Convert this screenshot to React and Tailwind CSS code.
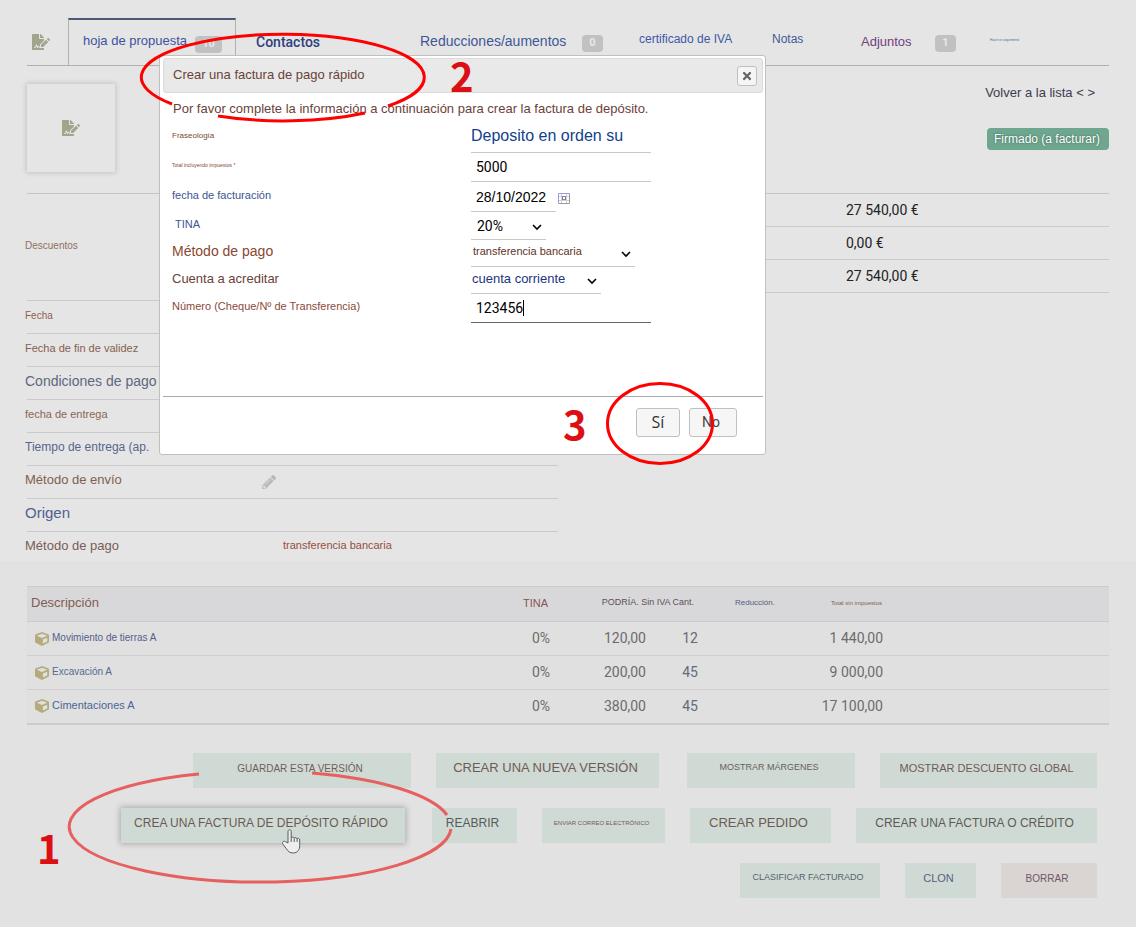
import { FaCube, FaFileSignature, FaPencilAlt, FaTimes } from "react-icons/fa";

const detailRows = [
  { label: "Descuentos", text: "text-[10px] text-[#8f6f63]", height: "h-[107px]" },
  { label: "Fecha", text: "text-[10px] text-[#8f5f50]", height: "h-[33px]" },
  { label: "Fecha de fin de validez", text: "text-[11px] text-[#85604f]", height: "h-[33px]" },
  { label: "Condiciones de pago", text: "text-[14px] text-[#5f6780]", height: "h-[33px]" },
  { label: "fecha de entrega", text: "text-[11px] text-[#8a6557]", height: "h-[33px]" },
  { label: "Tiempo de entrega (ap.", text: "text-[12px] text-[#566690]", height: "h-[33px]" },
  {
    label: "Método de envío",
    text: "text-[13px] text-[#80604f]",
    height: "h-[33px]",
    value: <FaPencilAlt className="size-3.5 text-[#b9b9b9]" />,
  },
  { label: "Origen", text: "text-[15px] text-[#50608f]", height: "h-[33px]" },
];

const totals = ["27 540,00 €", "0,00 €", "27 540,00 €"];

const lines = [
  { name: "Movimiento de tierras A", text: "text-[10px] text-[#56608a]", price: "120,00", qty: "12", total: "1 440,00" },
  { name: "Excavación A", text: "text-[10px] text-[#566a90]", price: "200,00", qty: "45", total: "9 000,00" },
  { name: "Cimentaciones A", text: "text-[11px] text-[#4a6596]", price: "380,00", qty: "45", total: "17 100,00" },
];

const actions = [
  { label: "GUARDAR ESTA VERSIÓN", style: "w-[218px] text-[10px] text-[#6e5f5a]" },
  { label: "CREAR UNA NUEVA VERSIÓN", style: "w-[223px] mr-[3px] text-[13px] text-[#6e5a56]" },
  { label: "MOSTRAR MÁRGENES", style: "w-[168px] text-[9px] text-[#66605c]" },
  { label: "MOSTRAR DESCUENTO GLOBAL", style: "w-[217px] text-[11px] text-[#6e5c56]" },
  {
    label: "CREA UNA FACTURA DE DEPÓSITO RÁPIDO",
    style: "w-[284px] mr-0.5 text-[12px] text-[#6a5a56] shadow-[0_0_6px_1px_rgba(0,0,0,0.25)]",
  },
  { label: "REABRIR", style: "w-[85px] text-[12px] text-[#565c5c]" },
  { label: "ENVIAR CORREO ELECTRÓNICO", style: "w-[123px] text-[6px] text-[#6e5a56]" },
  { label: "CREAR PEDIDO", style: "w-[141px] text-[13px] text-[#6e5a56]" },
  { label: "CREAR UNA FACTURA O CRÉDITO", style: "w-[241px] text-[12px] text-[#5c5c56]" },
  { label: "CLASIFICAR FACTURADO", style: "w-[140px] text-[9px] text-[#565f70]" },
  { label: "CLON", style: "w-[71px] text-[11px] text-[#5a6080]" },
];

const Badge = ({ children, className }) => (
  <span
    className={`mt-1 flex h-[17px] items-center justify-center rounded bg-[#c1c1c1] font-[Roboto,sans-serif] text-[11px] font-bold text-[#e8e8e8] ${className}`}
  >
    {children}
  </span>
);

const Tabs = () => (
  <nav className="flex h-12 items-stretch border-b border-[#b0b0b0] whitespace-nowrap">
    <div className="flex w-[41px] items-center pl-[5px]">
      <FaFileSignature className="h-4 w-[18px] text-[#a0a68c]" />
    </div>
    <a
      href="#propuesta"
      className="flex w-[168px] items-center border-x border-t-2 border-x-[#b0b0b0] border-t-[#4b5878] pl-3.5 text-[13px] text-[#3d529f]"
    >
      <span className="pb-1">hoja de propuesta</span>
      <Badge className="ml-2 w-[27px]">10</Badge>
    </a>
    <a
      href="#contactos"
      className="flex w-[184px] items-center pt-0.5 pl-5 font-[Roboto,sans-serif] text-[14px] font-medium text-[#2f4080]"
    >
      Contactos
    </a>
    <a href="#reducciones" className="flex w-[219px] items-center text-[14px] text-[#3f5796]">
      <span className="w-[162px]">Reducciones/aumentos</span>
      <Badge className="w-[21px]">0</Badge>
    </a>
    <a href="#certificado" className="flex w-[133px] items-center pb-1.5 text-[12px] text-[#4058a8]">
      certificado de IVA
    </a>
    <a href="#notas" className="flex w-[89px] items-center pb-1.5 text-[12px] text-[#405a98]">
      Notas
    </a>
    <a href="#adjuntos" className="flex w-[129px] items-center text-[13px] text-[#703f80]">
      <span className="w-[74px]">Adjuntos</span>
      <Badge className="w-[21px]">1</Badge>
    </a>
    <a href="#seguimiento" className="flex items-center pb-0.5 text-[3px] text-[#4a6a9a]">
      Hacer un seguimiento
    </a>
  </nav>
);

const Banner = () => (
  <header className="flex h-[127px] items-start justify-between pt-[18px]">
    <div className="flex size-[88px] items-center justify-center shadow-[0_0_5px_1px_rgba(0,0,0,0.15)]">
      <FaFileSignature className="h-4 w-[18px] text-[#a0a68c]" />
    </div>
    <div className="flex flex-col items-end">
      <a href="#lista" className="mr-3.5 text-[13px] leading-[18px] text-[#3c3a50]">
        Volver a la lista &lt; &gt;
      </a>
      <span className="mt-[26px] flex h-[22px] w-[122px] items-center rounded bg-[#6ea68f] pl-[7px] text-[12px] whitespace-nowrap text-white [text-shadow:0_0_2px_#2f5f4c]">
        Firmado (a facturar)
      </span>
    </div>
  </header>
);

const Details = () => (
  <div className="grid grid-cols-2 gap-5">
    <dl className="border-t border-[#c4c4c4]">
      {detailRows.map((row) => (
        <div
          key={row.label}
          className={`flex items-center border-b border-[#cacaca] ${row.height}`}
        >
          <dt className={`-ml-0.5 w-[237px] pb-1 whitespace-nowrap ${row.text}`}>{row.label}</dt>
          <dd>{row.value}</dd>
        </div>
      ))}
      <div className="flex h-[29px] items-center">
        <dt className="-ml-0.5 w-[258px] pb-0.5 text-[13px] text-[#7c5c56]">Método de pago</dt>
        <dd className="pb-0.5 text-[11px] text-[#964f3f]">transferencia bancaria</dd>
      </div>
    </dl>
    <div className="border-t border-[#c4c4c4] font-[Roboto,sans-serif] text-[14px] text-[#222]">
      {totals.map((total, i) => (
        <div key={i} className="flex h-[33px] items-center border-b border-[#cacaca] pl-[268px]">
          {total}
        </div>
      ))}
    </div>
  </div>
);

const LinesTable = () => (
  <table className="w-full table-fixed border-collapse border-t border-b-2 border-[#cbcbcd]">
    <colgroup>
      <col />
      <col className="w-[50px]" />
      <col className="w-24" />
      <col className="w-[52px]" />
      <col className="w-[77px]" />
      <col className="w-[108px]" />
      <col className="w-[226px]" />
    </colgroup>
    <thead>
      <tr className="h-[35px] border-b border-[#cbcbcd] bg-[#d8d8da] text-right whitespace-nowrap [&>th]:p-0 [&>th]:pb-0.5 [&>th]:font-normal">
        <th className="text-left text-[13px] text-[#835c50]">
          <span className="pl-1">Descripción</span>
        </th>
        <th className="text-[11px] text-[#835650]">
          <span className="pr-0.5">TINA</span>
        </th>
        <th colSpan={2} className="text-[9px] text-[#5f4f5c]">
          <span className="pr-1">PODRÍA. Sin IVA Cant.</span>
        </th>
        <th className="text-[8px] text-[#56607c]">Reducción.</th>
        <th className="text-[6px] text-[#835c56]">
          <span className="pr-px">Total sin impuestos</span>
        </th>
        <th />
      </tr>
    </thead>
    <tbody>
      {lines.map((line) => (
        <tr
          key={line.name}
          className="h-[34px] border-b border-[#cfcfcf] bg-[#e0e0e0] text-right font-[Roboto,sans-serif] text-[14px] text-[#6c6c6c] [&>td]:p-0"
        >
          <td className="text-left">
            <a
              href="#producto"
              className={`flex items-center gap-[3px] pl-2 font-['Liberation_Sans',Arial,sans-serif] ${line.text}`}
            >
              <FaCube className="size-3.5 text-[#b5aa7b]" />
              <span className="pb-0.5">{line.name}</span>
            </a>
          </td>
          <td>0%</td>
          <td>{line.price}</td>
          <td className="text-[#666a78]">{line.qty}</td>
          <td />
          <td>{line.total}</td>
          <td />
        </tr>
      ))}
    </tbody>
  </table>
);

const Actions = () => (
  <div className="flex flex-wrap justify-end gap-x-[25px] gap-y-5 pt-7 pr-3">
    {actions.map((action) => (
      <button
        key={action.label}
        type="button"
        className={`h-[35px] bg-[#d0dad4] pr-1 pb-1 whitespace-nowrap ${action.style}`}
      >
        {action.label}
      </button>
    ))}
    <button type="button" className="h-[35px] w-24 bg-[#dad4d2] pr-1 pb-1 text-[10px] text-[#70566c]">
      BORRAR
    </button>
  </div>
);

const Field = ({ id, label, labelStyle, height, children }) => (
  <div className={`flex ${height}`}>
    <label htmlFor={id} className={`flex w-[299px] items-center pb-1 ${labelStyle}`}>
      {label}
    </label>
    {children}
  </div>
);

const Select = ({ id, value, className }) => (
  <div className={`relative border-b border-[#c8c8c8] ${className}`}>
    <select id={id} className="size-full appearance-none bg-transparent outline-none">
      <option>{value}</option>
    </select>
    <svg
      viewBox="0 0 10 7"
      className="pointer-events-none absolute right-1 bottom-2 h-[7px] w-2.5 fill-none stroke-black stroke-[1.6px]"
    >
      <path d="M1 1l4 4 4-4" />
    </svg>
  </div>
);

const CalendarIcon = () => (
  <svg viewBox="0 0 12 11" className="h-[11px] w-3 fill-none">
    <path d="M1 3.5h10M1 7.5h10M3.5 1v9M8.5 1v9" stroke="#cfcfd6" />
    <path d="M.5 10.5V.5h11" stroke="#9a9ae0" />
    <path d="M.5 10.500h11V.5" stroke="#9a9a9a" />
    <rect x="4.5" y="3.5" width="3" height="3" stroke="#8a7f9a" />
  </svg>
);

const DepositDialog = () => (
  <div
    role="dialog"
    aria-labelledby="dialog-title"
    className="absolute top-[55px] left-[159px] flex h-[400px] w-[607px] flex-col rounded-[3px] border border-[#c0c0c0] bg-white py-0.5 pr-0.5 pl-[3px]"
  >
    <div className="flex h-[35px] shrink-0 items-center justify-between rounded-[3px] border border-[#dadada] bg-[#e9e9e9] pr-[5px] pl-[9px]">
      <h2 id="dialog-title" className="pb-0.5 text-[13px] text-[#6b4238]">
        Crear una factura de pago rápido
      </h2>
      <button
        type="button"
        aria-label="Cerrar"
        className="flex size-5 items-center justify-center rounded-[3px] border border-[#c0c0c0] bg-[#f5f5f5]"
      >
        <FaTimes className="size-3 text-[#666]" />
      </button>
    </div>
    <form className="flex-1 pl-[9px]">
      <p className="flex h-[29px] items-center pt-0.5 pl-px text-[13px] text-[#6b4238]">
        Por favor complete la información a continuación para crear la factura de depósito.
      </p>
      <Field id="fraseologia" label="Fraseología" labelStyle="text-[8px] text-[#7c4836]" height="h-[31px]">
        <input
          id="fraseologia"
          defaultValue="Deposito en orden su"
          className="w-[180px] border-b border-[#c8c8c8] pb-0.5 text-[16px] text-[#123f8c] outline-none"
        />
      </Field>
      <Field id="total" label="Total incluyendo impuestos *" labelStyle="text-[5px] text-[#7c4836]" height="h-[29px]">
        <input
          id="total"
          defaultValue="5000"
          className="w-[180px] border-b border-[#c8c8c8] pl-[5px] font-[Roboto,sans-serif] text-[14px] text-black outline-none"
        />
      </Field>
      <Field id="fecha" label="fecha de facturación" labelStyle="text-[11px] text-[#3d5592]" height="h-[30px]">
        <input
          id="fecha"
          defaultValue="28/10/2022"
          className="w-[85px] border-b border-[#c8c8c8] pt-0.5 pl-[5px] text-[14px] text-black outline-none"
        />
        <button type="button" aria-label="Calendario" className="pt-0.5 pl-0.5">
          <CalendarIcon />
        </button>
      </Field>
      <Field id="tina" label="TINA" labelStyle="pl-[3px] text-[11px] text-[#3d5592]" height="h-7">
        <Select
          id="tina"
          value="20%"
          className="w-[75px] pt-0.5 pl-1.5 font-[Roboto,sans-serif] text-[14px] text-black"
        />
      </Field>
      <Field id="metodo" label="Método de pago" labelStyle="text-[14px] text-[#8a4830]" height="h-[27px]">
        <Select id="metodo" value="transferencia bancaria" className="w-[164px] pb-[3px] pl-0.5 text-[11px] text-[#5f3326]" />
      </Field>
      <Field id="cuenta" label="Cuenta a acreditar" labelStyle="text-[13px] text-[#6b4238]" height="h-[27px]">
        <Select id="cuenta" value="cuenta corriente" className="w-[130px] pb-[3px] pl-px text-[13px] text-[#1c3680]" />
      </Field>
      <Field
        id="numero"
        label="Número (Cheque/Nº de Transferencia)"
        labelStyle="text-[11px] text-[#8a4a3c]"
        height="h-[29px]"
      >
        <div className="relative w-[180px] border-b border-[#666]">
          <input
            id="numero"
            defaultValue="123456"
            className="size-full pl-[5px] font-[Roboto,sans-serif] text-[14px] text-black outline-none"
          />
          <span className="absolute top-1.5 left-[52px] h-4 w-px bg-black" />
        </div>
      </Field>
    </form>
    <div className="flex h-14 shrink-0 items-start justify-end gap-[9px] border-t border-[#aaa] pt-[11px] pr-[26px]">
      <button
        type="button"
        className="h-[29px] w-11 rounded-[3px] border border-[#c0c0c0] bg-[#f6f6f6] pb-0.5 font-['Open_Sans',sans-serif] text-[16px] leading-none text-[#333]"
      >
        Sí
      </button>
      <button
        type="button"
        className="h-[29px] w-12 rounded-[3px] border border-[#c0c0c0] bg-[#f6f6f6] pr-1 font-[Roboto,sans-serif] text-[14px] text-[#454545]"
      >
        No
      </button>
    </div>
  </div>
);

const Annotations = () => (
  <div className="pointer-events-none absolute inset-0 overflow-hidden font-['Noto_Sans_CJK_SC',sans-serif] text-[40px] leading-10 font-bold text-[#dd0f14]">
    <svg viewBox="0 0 1136 927" className="absolute top-0 left-0 h-[927px] w-[1136px] fill-none stroke-3">
      <path d="M312 773A191 55.5 0 0 1 447 815M451 829A191 55.5 0 1 1 199 774" stroke="#e66060" />
      <path d="M172 104A141.5 43 0 1 1 388 106M365 113A141.5 43 0 0 1 218 116" stroke="#f00" />
      <ellipse cx="660" cy="423.5" rx="52.5" ry="40" stroke="#f00" />
      {/* hand pointer */}
      <path
        d="M288 843v-11.5c0-2.4 3.2-2.4 3.2 0v6.5c.3-1.3 2.8-1.2 3 .3.6-1.2 2.7-.9 2.900.6.7-1 2.6-.6 2.6 1.1v5.500c0 4-2 7.500-6.500 7.500-3.700 0-5.200-1.700-7-4.500l-3.400-4.600c-1.200-2 1-3.400 2.600-2.200z"
        fill="#eee"
        stroke="#5a5a66"
        strokeWidth="1"
      />
      <path d="M291.200 838v4M294.200 838.500v3.500M297.100 839v3" stroke="#5a5a66" strokeWidth="1" />
    </svg>
    <span className="absolute top-[827px] left-[37px]">1</span>
    <span className="absolute top-[55px] left-[450px]">2</span>
    <span className="absolute top-[403px] left-[563px]">3</span>
  </div>
);

const App = () => {
  return (
    <div className="relative min-h-screen bg-[#e2e2e2] font-['Liberation_Sans',Arial,sans-serif]">
      <div className="bg-[#e5e5e5] px-[27px] pt-[18px]">
        <Tabs />
        <Banner />
        <Details />
      </div>
      <main className="px-[27px] pt-[25px]">
        <LinesTable />
        <Actions />
      </main>
      <DepositDialog />
      <Annotations />
    </div>
  );
};

export default App;
